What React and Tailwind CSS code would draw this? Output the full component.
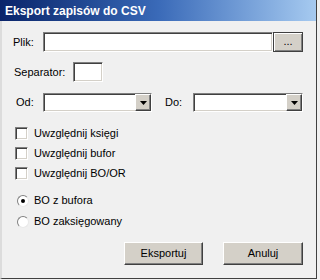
import React from 'react';

const sunken = 'border border-t-[#808080] border-l-[#808080] border-b-[#ffffff] border-r-[#ffffff] shadow-[inset_1px_1px_0_#404040,inset_-1px_-1px_0_#d4d0c8]';
const raised = 'bg-[#d4d0c8] border border-t-[#ffffff] border-l-[#ffffff] border-b-[#404040] border-r-[#404040] shadow-[inset_-1px_-1px_0_#808080]';

function Combo({ className }) {
  return (
    <div className={`h-[19px] bg-white flex justify-end ${sunken} ${className}`}>
      <div className={`w-[16px] h-full flex items-center justify-center ${raised}`}>
        <svg width="7" height="4" viewBox="0 0 7 4">
          <path d="M0 0h7L3.5 4z" fill="#000" />
        </svg>
      </div>
    </div>
  );
}

function Checkbox({ label }) {
  return (
    <div className="flex items-center h-[13px]">
      <div className={`w-[13px] h-[13px] bg-white ${sunken}`} />
      <span className="ml-[6px]">{label}</span>
    </div>
  );
}

function Radio({ label, checked }) {
  return (
    <div className="flex items-center h-[13px]">
      <div className="ml-[2px] w-[12px] h-[12px] rounded-full bg-white border border-t-[#808080] border-l-[#808080] border-b-[#e8e8e8] border-r-[#e8e8e8] flex items-center justify-center">
        {checked && <div className="w-[4px] h-[4px] rounded-full bg-black" />}
      </div>
      <span className="ml-[5px]">{label}</span>
    </div>
  );
}

export default function App() {
  return (
    <div className="w-[320px] h-[280px] bg-[#f0f0f0] font-['Liberation_Sans',Arial,sans-serif] text-[11px] text-black">
      <div className="w-[317px] h-[279px] flex flex-col border-l-2 border-l-[#dcdcdc] border-r border-r-[#404040] border-b border-b-[#404040]">
        {/* Title bar */}
        <div className="h-[21px] -ml-[2px] bg-linear-to-r from-[#0a246a] via-[#3a6ab8] to-[#a6caf0] flex items-center pl-[5px]">
          <span className="text-white font-bold text-[12px]">Eksport zapisów do CSV</span>
        </div>

        <div className="flex flex-col pl-[11px]">
          {/* Plik */}
          <div className="flex items-center h-[20px] mt-[11px]">
            <span className="w-[30px]">Plik:</span>
            <div className={`w-[230px] h-[20px] bg-white ${sunken}`} />
            <div className="w-[30px] h-[20px] bg-[#d4d0c8] border border-[#404040] shadow-[inset_1px_1px_0_#ffffff,inset_-1px_-1px_0_#808080] flex items-center justify-center leading-none pb-[2px]">
              ...
            </div>
          </div>

          {/* Separator */}
          <div className="flex items-center h-[20px] mt-[10px]">
            <span className="w-[60px] pl-[1px]">Separator:</span>
            <div className={`w-[30px] h-[20px] bg-white ${sunken}`} />
          </div>

          {/* Od / Do */}
          <div className="flex items-center h-[19px] mt-[11px]">
            <span className="w-[30px] pl-[3px]">Od:</span>
            <Combo className="w-[109px]" />
            <span className="w-[41px] pl-[13px]">Do:</span>
            <Combo className="w-[110px]" />
          </div>

          {/* Checkboxes */}
          <div className="flex flex-col gap-[7px] mt-[15px] pl-[2px]">
            <Checkbox label="Uwzględnij księgi" />
            <Checkbox label="Uwzględnij bufor" />
            <Checkbox label="Uwzględnij BO/OR" />
          </div>

          {/* Radios */}
          <div className="flex flex-col gap-[8px] mt-[14px] pl-[2px]">
            <Radio label="BO z bufora" checked />
            <Radio label="BO zaksięgowany" />
          </div>

          {/* Buttons */}
          <div className="flex justify-end gap-[20px] mt-[14px] pr-[13px]">
            <div className={`w-[79px] h-[23px] flex items-center justify-center ${raised}`}>Eksportuj</div>
            <div className={`w-[80px] h-[23px] flex items-center justify-center ${raised}`}>Anuluj</div>
          </div>
        </div>
      </div>
    </div>
  );
}
